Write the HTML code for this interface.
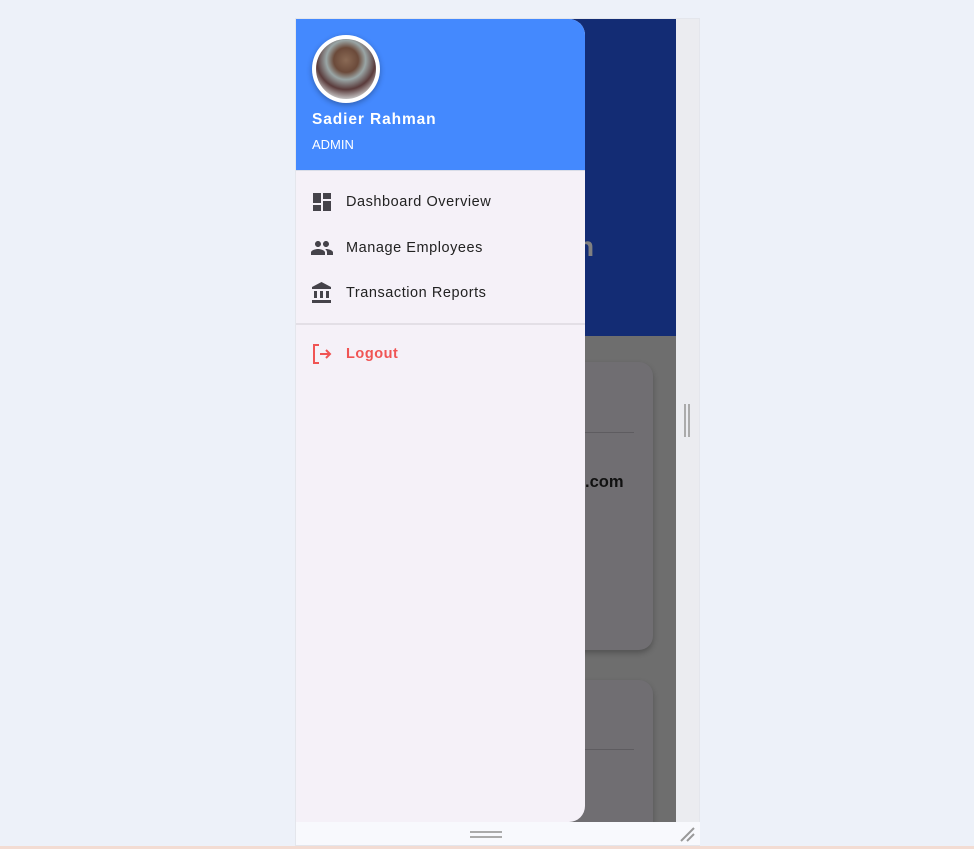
<!DOCTYPE html>
<html><head><meta charset="utf-8"><style>
*{margin:0;padding:0;box-sizing:border-box}
body{width:974px;height:849px;background:#edf1f9;position:relative;overflow:hidden;font-family:"Liberation Sans",sans-serif}
.frame{position:absolute;left:295px;top:18px;width:405px;height:828px;background:#ebecf0;border:1px solid #e4e6ec}
.app{position:absolute;left:296px;top:19px;width:380px;height:803px;background:#6e6e6e;overflow:hidden}
.hdr{position:absolute;left:0;top:0;width:380px;height:317px;background:#132c74}
.card{position:absolute;left:0;width:357px;background:#706e72;border-radius:14px;box-shadow:0 3px 6px rgba(0,0,0,.25)}
.bottom{position:absolute;left:296px;top:822px;width:404px;height:23px;background:#f8f9fd}
.peach{position:absolute;left:0;top:846px;width:974px;height:3px;background:#f3dcd3}
.drawer{position:absolute;left:296px;top:19px;width:289px;height:803px;background:#f5f1f8;border-radius:0 16px 16px 0;overflow:hidden}
.dh{height:152px;background:#4489fe;border-bottom:1px solid #d9dde8;position:relative}
.av{position:absolute;left:16px;top:16px;width:68px;height:68px;border-radius:50%;background:#fff;box-shadow:0 2px 6px rgba(0,0,0,.3)}
.av div{position:absolute;left:4px;top:4px;width:60px;height:60px;border-radius:50%;background:radial-gradient(circle at 50% 35%,#8a6a55 0,#6b4a3a 25%,#9aa6a6 40%,#5a3b3b 60%,#c9c9c9 80%)}
.name{position:absolute;left:16px;top:92px;color:#fff;font-weight:bold;font-size:15.5px;letter-spacing:.9px}
.role{position:absolute;left:16px;top:118px;color:#fff;font-size:13px}
.item{position:absolute;left:14px;height:24px;display:flex;align-items:center;font-size:14.5px;color:#222;letter-spacing:.55px}
.item svg{width:24px;height:24px;margin-right:12px;fill:#45434a}
</style></head><body>
<div class="frame"></div>
<div class="app">
<div class="hdr"></div>
<div style="position:absolute;left:281px;top:212px;color:#808080;font-weight:bold;font-size:28px">n</div>
<div class="card" style="top:343px;height:288px">
<div style="position:absolute;left:0;right:19px;top:70px;height:1px;background:#5e5c60"></div>
<div style="position:absolute;left:289px;top:111px;font-weight:bold;font-size:16.5px;color:#111">.com</div>
</div>
<div class="card" style="top:661px;height:200px">
<div style="position:absolute;left:0;right:19px;top:69px;height:1px;background:#5e5c60"></div>
</div>
</div>
<div style="position:absolute;left:684px;top:404px;width:2px;height:33px;background:#aaa"></div>
<div style="position:absolute;left:688px;top:404px;width:2px;height:33px;background:#aaa"></div>
<div class="bottom">
<div style="position:absolute;left:174px;top:9px;width:32px;height:2px;background:#aaa"></div>
<div style="position:absolute;left:174px;top:14px;width:32px;height:2px;background:#aaa"></div>
<svg style="position:absolute;left:383px;top:3px" width="18" height="18"><path d="M2 16L15 3M8 16L15 9" stroke="#999" stroke-width="2"/></svg>
</div>
<div class="peach"></div>
<div class="drawer">
<div class="dh"><div class="av"><div></div></div>
<div class="name">Sadier Rahman</div><div class="role">ADMIN</div></div>
<div class="item" style="top:171px"><svg viewBox="0 0 24 24"><path d="M3 13h8V3H3v10zm0 8h8v-6H3v6zm10 0h8V11h-8v10zm0-18v6h8V3h-8z"/></svg>Dashboard Overview</div>
<div class="item" style="top:217px"><svg viewBox="0 0 24 24"><path d="M16 11c1.66 0 2.99-1.34 2.99-3S17.66 5 16 5c-1.66 0-3 1.34-3 3s1.34 3 3 3zm-8 0c1.660 0 2.99-1.34 2.99-3S9.66 5 8 5C6.34 5 5 6.34 5 8s1.34 3 3 3zm0 2c-2.33 0-7 1.17-7 3.5V19h14v-2.5c0-2.33-4.67-3.5-7-3.5zm8 0c-.29 0-.62.02-.97.05 1.16.84 1.970 1.97 1.97 3.45V19h6v-2.5c0-2.33-4.67-3.5-7-3.5z"/></svg>Manage Employees</div>
<div class="item" style="top:262px"><svg viewBox="0 0 24 24"><path d="M4 10v7h3v-7H4zm6 0v7h3v-7h-3zM2 22h19v-3H2v3zm14-12v7h3v-7h-3zm-4.5-9L2 6v2h19V6l-9.5-5z"/></svg>Transaction Reports</div>
<div style="position:absolute;left:0;top:304px;width:289px;height:2px;background:#e3dfe6"></div>
<div class="item" style="top:323px;color:#f05454;font-weight:bold;font-size:14.5px"><svg viewBox="0 0 24 24" style="fill:none;stroke:#f05454;stroke-width:2"><path d="M9 3H4v18h5M10 12h10M16 8l4 4-4 4"/></svg>Logout</div>
</div>
</body></html>
